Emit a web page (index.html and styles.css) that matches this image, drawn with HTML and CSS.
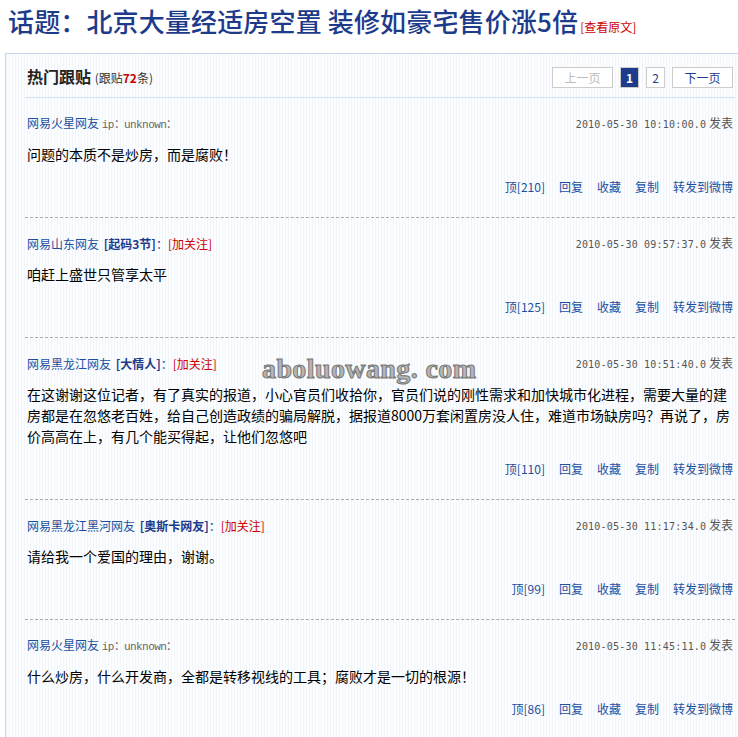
FILE: index.html
```html
<!DOCTYPE html>
<html lang="zh-CN">

<head>
  <meta charset="UTF-8">
  <title>话题：北京大量经适房空置 装修如豪宅售价涨5倍</title>
  <link rel="stylesheet" href="styles.css">
</head>

<body>
  <h1 class="topic">话题：北京大量经适房空置 装修如豪宅售价涨5倍<a class="source" href="#">[查看原文]</a></h1>

  <div class="panel">
    <div class="panel-head">
      <h2>热门跟贴 <span class="count">(跟贴<b>72</b>条)</span></h2>
      <div class="pager">
        <span class="prev">上一页</span>
        <span class="num cur">1</span>
        <a class="num" href="#">2</a>
        <a class="next" href="#">下一页</a>
      </div>
    </div>

    <div class="post">
      <div class="post-meta">
        <div><a class="user" href="#">网易火星网友</a> <span class="ip">ip：unknown：</span></div>
        <div class="time"><span class="stamp">2010-05-30 10:10:00.0</span> 发表</div>
      </div>
      <div class="post-body">问题的本质不是炒房，而是腐败！</div>
      <div class="post-actions">
        <a href="#">顶[210]</a><a href="#">回复</a><a href="#">收藏</a><a href="#">复制</a><a href="#">转发到微博</a>
      </div>
    </div>

    <div class="post">
      <div class="post-meta">
        <div><a class="user" href="#">网易山东网友</a> <span class="rank">[起码3节]</span><span class="colon">：</span><a class="follow" href="#">[加关注]</a></div>
        <div class="time"><span class="stamp">2010-05-30 09:57:37.0</span> 发表</div>
      </div>
      <div class="post-body">咱赶上盛世只管享太平</div>
      <div class="post-actions">
        <a href="#">顶[125]</a><a href="#">回复</a><a href="#">收藏</a><a href="#">复制</a><a href="#">转发到微博</a>
      </div>
    </div>

    <div class="post">
      <div class="post-meta">
        <div><a class="user" href="#">网易黑龙江网友</a> <span class="rank">[大情人]</span><span class="colon">：</span><a class="follow" href="#">[加关注]</a></div>
        <div class="time"><span class="stamp">2010-05-30 10:51:40.0</span> 发表</div>
      </div>
      <div class="post-body">在这谢谢这位记者，有了真实的报道，小心官员们收拾你，官员们说的刚性需求和加快城市化进程，需要大量的建房都是在忽悠老百姓，给自己创造政绩的骗局解脱，据报道8000万套闲置房没人住，难道市场缺房吗？再说了，房价高高在上，有几个能买得起，让他们忽悠吧</div>
      <div class="post-actions">
        <a href="#">顶[110]</a><a href="#">回复</a><a href="#">收藏</a><a href="#">复制</a><a href="#">转发到微博</a>
      </div>
    </div>

    <div class="post">
      <div class="post-meta">
        <div><a class="user" href="#">网易黑龙江黑河网友</a> <span class="rank">[奥斯卡网友]</span><span class="colon">：</span><a class="follow" href="#">[加关注]</a></div>
        <div class="time"><span class="stamp">2010-05-30 11:17:34.0</span> 发表</div>
      </div>
      <div class="post-body">请给我一个爱国的理由，谢谢。</div>
      <div class="post-actions">
        <a href="#">顶[99]</a><a href="#">回复</a><a href="#">收藏</a><a href="#">复制</a><a href="#">转发到微博</a>
      </div>
    </div>

    <div class="post">
      <div class="post-meta">
        <div><a class="user" href="#">网易火星网友</a> <span class="ip">ip：unknown：</span></div>
        <div class="time"><span class="stamp">2010-05-30 11:45:11.0</span> 发表</div>
      </div>
      <div class="post-body">什么炒房，什么开发商，全都是转移视线的工具；腐败才是一切的根源！</div>
      <div class="post-actions">
        <a href="#">顶[86]</a><a href="#">回复</a><a href="#">收藏</a><a href="#">复制</a><a href="#">转发到微博</a>
      </div>
    </div>
  </div>

  <div class="watermark">aboluowang. com</div>
</body>

</html>
```

FILE: styles.css
```css
body {
  margin: 0;
  font-family: "Noto Sans CJK SC", sans-serif;
  background-color: #fff;
  position: relative;
  overflow: hidden;
}

a {
  text-decoration: none;
}

.topic {
  margin: 0;
  padding-left: 8px;
  height: 53px;
  line-height: 41px;
  font-size: 26px;
  font-weight: 500;
  letter-spacing: 0.15px;
  color: #1d3b8b;
  white-space: nowrap;
}

.topic .source {
  font-size: 12px;
  font-weight: normal;
  letter-spacing: 0;
  color: #c00;
  margin-left: 2px;
}

.panel {
  margin-left: 5px;
  padding: 0 3px 0 19px;
  border-top: 1px solid #c6d7ec;
  border-left: 1px solid #c6d7ec;
  background: repeating-linear-gradient(90deg, #f2f6fa 0 1px, #fcfdfe 1px 3px);
}

.panel-head {
  height: 43px;
  padding-left: 2px;
  border-bottom: 1px solid #d3e1f3;
  display: flex;
  align-items: center;
  justify-content: space-between;
}

.panel-head h2 {
  margin: 0;
  font-size: 16px;
  color: #222;
}

.count {
  font-size: 12px;
  font-weight: normal;
  color: #333;
}

.count b {
  color: #c00;
}

.pager {
  display: flex;
  gap: 7px;
  padding-top: 3px;
  margin-right: 2px;
}

.pager span,
.pager a {
  height: 19px;
  line-height: 19px;
  border: 1px solid #ccc;
  background-color: #fff;
  font-size: 12px;
  text-align: center;
  color: #1d3b8b;
}

.prev,
.next {
  width: 59px;
}

.pager .prev {
  color: #bbb;
}

.num {
  width: 17px;
}

.pager .cur {
  background-color: #1d3b8b;
  color: #fff;
  font-weight: bold;
}

.post {
  padding: 16px 2px 20px;
  border-bottom: 1px dashed #aaa;
}

.post-meta {
  display: flex;
  align-items: center;
  justify-content: space-between;
  height: 20px;
  line-height: 20px;
  font-size: 12px;
}

.user {
  color: #1b4f9f;
}

.ip {
  font-family: "Liberation Mono", monospace;
  font-size: 11px;
  letter-spacing: -0.6px;
  color: #666;
}

.rank {
  font-weight: bold;
  color: #1d3b8b;
  margin-left: 2px;
}

.colon {
  color: #1d3b8b;
}

.follow {
  color: #c00;
}

.time {
  color: #555;
}

.stamp {
  font-family: "DejaVu Sans Mono", monospace;
  font-size: 10px;
  letter-spacing: 0.2px;
}

.post-body {
  margin-top: 10px;
  font-size: 14px;
  line-height: 21px;
  color: #000;
}

.post-actions {
  margin-top: 12px;
  height: 20px;
  line-height: 20px;
  font-size: 12px;
  display: flex;
  justify-content: flex-end;
  gap: 14px;
}

.post-actions a {
  color: #1b4f9f;
}

.watermark {
  position: absolute;
  left: 262px;
  top: 353px;
  font-family: "Liberation Serif", serif;
  font-size: 28px;
  font-weight: bold;
  letter-spacing: 0.4px;
  color: #b5b5b5;
  -webkit-text-stroke: 1px #777;
}
```
